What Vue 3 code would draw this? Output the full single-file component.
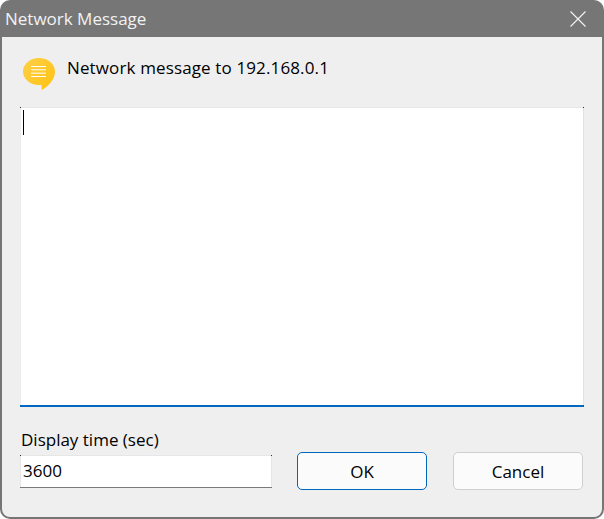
<template>
  <div class="win">
    <div class="titlebar">
      <span class="title">Network Message</span>
      <svg class="close" width="16" height="16" viewBox="0 0 16 16">
        <path d="M0.5 0.5L15.5 15.5M15.5 0.5L0.5 15.5" stroke="#f4f4f4" stroke-width="1.1" fill="none" />
      </svg>
    </div>
    <div class="body">
      <div class="head">
        <svg class="icon" width="34" height="34" viewBox="0 0 34 34">
          <defs>
            <linearGradient id="bubble" x1="0" y1="0" x2="1" y2="1">
              <stop offset="0" stop-color="#fdd04a" />
              <stop offset="1" stop-color="#ffc20e" />
            </linearGradient>
          </defs>
          <path d="M17 1C26 1 33 7 33 14.5C33 22 27 29 20 33C19.6 31.5 19.5 30 19.5 28C18.5 28.1 17.8 28 17 28C8 28 1 22 1 14.5C1 7 8 1 17 1Z" fill="url(#bubble)" />
          <path d="M9 9.5H24M9 12.8H24M9 16.2H24M9 19.5H24" stroke="#fff" stroke-width="1" />
        </svg>
        <span>Network message to 192.168.0.1</span>
      </div>
      <div class="memo">
        <i class="caret"></i>
      </div>
      <div class="bottom">
        <div class="field">
          <label>Display time (sec)</label>
          <div class="input">3600</div>
        </div>
        <button class="btn ok">OK</button>
        <button class="btn">Cancel</button>
      </div>
    </div>
  </div>
</template>

<script setup>
</script>

<style>
html, body { margin: 0; background: #fff; }
</style>

<style scoped>
.win {
  width: 604px;
  height: 519px;
  box-sizing: border-box;
  display: flex;
  flex-direction: column;
  background: #767676;
  border-radius: 10px;
  overflow: hidden;
  font-family: "Open Sans", "Noto Sans", sans-serif;
  font-size: 17px;
  color: #000;
}
.titlebar {
  height: 37px;
  flex: none;
  display: flex;
  align-items: center;
  justify-content: space-between;
  padding: 0 18px 0 5px;
}
.title { color: #f2f2f2; }
.body {
  flex: 1;
  margin: 0 2px 2px;
  background: #efefef;
  border-radius: 0 0 8px 8px;
  padding: 0 18px;
  display: flex;
  flex-direction: column;
}
.head {
  height: 70px;
  flex: none;
  display: flex;
  align-items: flex-start;
  gap: 11px;
}
.head span { margin-top: 19px; letter-spacing: 0.13px; }
.icon { margin-top: 20px; margin-left: 2px; }
.memo {
  height: 300px;
  flex: none;
  box-sizing: border-box;
  border-bottom: 2px solid #0067c0;
  padding: 3px 3px 0;
  background:
    linear-gradient(#333, #333) 0 0 / 1px 1px no-repeat,
    linear-gradient(#333, #333) 100% 0 / 1px 1px no-repeat,
    linear-gradient(#e6e6e6, #e6e6e6) 0 0 / 100% 1px no-repeat,
    linear-gradient(#e2e2e2, #e2e2e2) 100% 0 / 1px 100% no-repeat,
    linear-gradient(#ececec, #ececec) 0 0 / 1px 100% no-repeat,
    #fff;
}
.caret { display: block; width: 1px; height: 25px; background: #000; }
.bottom {
  display: flex;
  align-items: flex-end;
  margin-top: 22px;
}
.field { width: 252px; margin: 0 25px 2px 0; }
.field label { display: block; line-height: 22px; margin-bottom: 4px; padding-left: 1px; }
.input {
  height: 33px;
  box-sizing: border-box;
  line-height: 32px;
  padding-left: 3px;
  background:
    linear-gradient(#333, #333) 0 0 / 1px 1px no-repeat,
    linear-gradient(#333, #333) 100% 0 / 1px 1px no-repeat,
    linear-gradient(#7a7a7a, #7a7a7a) 0 100% / 100% 1px no-repeat,
    linear-gradient(#e6e6e6, #e6e6e6) 0 0 / 100% 1px no-repeat,
    linear-gradient(#e6e6e6, #e6e6e6) 0 0 / 1px 100% no-repeat,
    linear-gradient(#e6e6e6, #e6e6e6) 100% 0 / 1px 100% no-repeat,
    #fff;
}
.btn {
  width: 130px;
  height: 38px;
  box-sizing: border-box;
  border: 1px solid #cfcfcf;
  border-radius: 5px;
  background: #fbfbfb;
  font: inherit;
  color: inherit;
  margin-right: 26px;
  padding: 1px 0 0;
}
.btn:last-child { margin-right: 0; }
.ok { border-color: #0067c0; }
</style>
